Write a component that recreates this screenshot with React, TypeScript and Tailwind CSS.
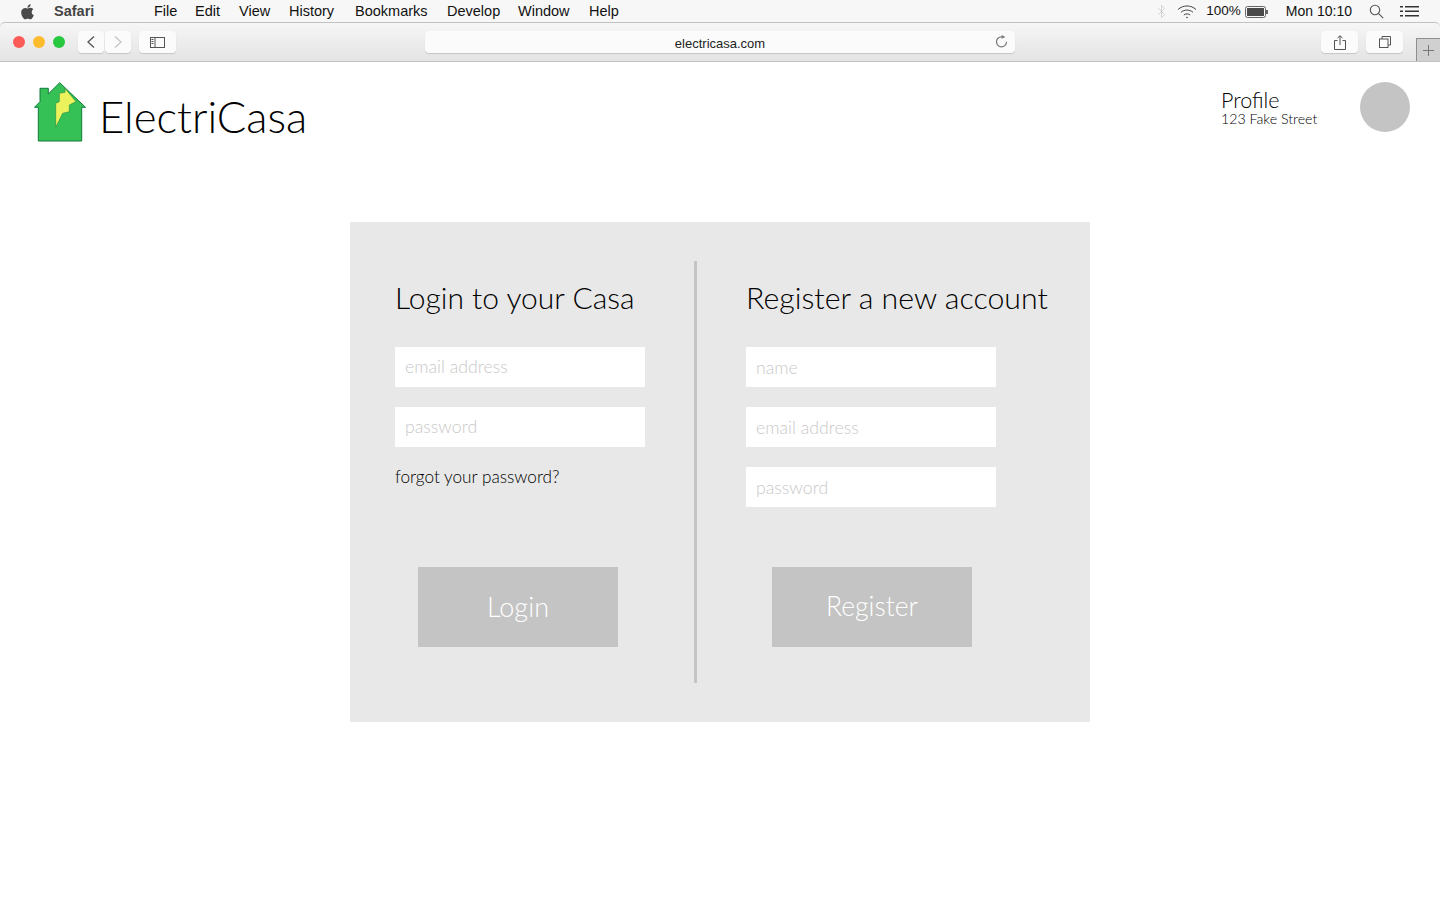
import React from "react";
import { Bluetooth } from "lucide-react";

const menuItems = ["File", "Edit", "View", "History", "Bookmarks", "Develop", "Window", "Help"];

function AppleLogo() {
  return (
    <svg width="15" height="16" viewBox="3 3 18 18.5" fill="#4a4a4a">
      <path d="M17.05 20.28c-.98.95-2.05.8-3.08.35-1.09-.46-2.09-.48-3.24 0-1.44.62-2.2.44-3.06-.35C2.79 15.25 3.51 7.59 9.05 7.31c1.35.07 2.29.74 3.08.8 1.18-.24 2.31-.93 3.57-.84 1.51.12 2.65.72 3.4 1.8-3.12 1.87-2.38 5.98.48 7.13-.57 1.5-1.31 2.99-2.54 4.09zM12.03 7.25c-.15-2.23 1.66-4.07 3.74-4.25.29 2.58-2.34 4.5-3.74 4.25z" />
    </svg>
  );
}

function Wifi() {
  return (
    <svg width="20" height="15" viewBox="0 0 20 15" fill="none" stroke="#444" strokeWidth="1">
      <path d="M1 5.5C6 .8 14 .8 19 5.5" />
      <path d="M4 8.3c3.4-3 8.6-3 12 0" />
      <path d="M6.8 11c1.9-1.5 4.5-1.5 6.4 0" />
      <circle cx="10" cy="13.5" r="0.8" fill="#444" stroke="none" />
    </svg>
  );
}

function Battery() {
  return (
    <svg width="24" height="12" viewBox="0 0 24 12">
      <rect x="0.5" y="0.5" width="20" height="11" rx="2" fill="none" stroke="#666" />
      <rect x="2" y="2" width="17" height="8" fill="#4a4a4a" />
      <rect x="21" y="4" width="2" height="4" fill="#666" />
    </svg>
  );
}

function SearchIcon() {
  return (
    <svg width="15" height="15" viewBox="0 0 15 15" fill="none" stroke="#555" strokeWidth="1.1" className="ml-[17px]">
      <circle cx="6" cy="6" r="4.7" />
      <path d="M9.4 9.4l4.8 4.8" />
    </svg>
  );
}

function ListIcon() {
  return (
    <svg width="19" height="11" viewBox="0 0 19 11" fill="#333">
      <rect x="0" y="0" width="3" height="1.5" />
      <rect x="0" y="4.5" width="3" height="1.5" />
      <rect x="0" y="9" width="3" height="1.5" />
      <rect x="5" y="0" width="14" height="1.5" />
      <rect x="5" y="4.5" width="14" height="1.5" />
      <rect x="5" y="9" width="14" height="1.5" />
    </svg>
  );
}

function Logo() {
  return (
    <svg width="52" height="60" viewBox="0 0 52 60" className="shrink-0">
      <polygon
        points="6,6.3 14.3,6.3 14.3,12 25.7,0.7 51.5,25.3 47.7,25.3 47.7,59 4.3,59 4.3,25.3 0.5,25.3 6,19.7"
        fill="#35c155"
        stroke="#127a3c"
        strokeWidth="1"
      />
      <polygon
        points="31,6.3 42,19.7 35.3,23 35.3,29.7 28.7,31.3 21.7,45.3 21.7,21.3 25.3,19.7 25.3,11.3 31,10.3"
        fill="#ecf25c"
        stroke="#1e8a45"
        strokeWidth="0.6"
      />
    </svg>
  );
}

function ToolButton({ className, children }: { className: string; children: React.ReactNode }) {
  return (
    <div className={`h-[22px] bg-[#fbfbfb] rounded-[4px] shadow-[0_1px_1px_rgba(0,0,0,0.15)] flex items-center justify-center ${className}`}>
      {children}
    </div>
  );
}

function Field({ placeholder, className }: { placeholder: string; className?: string }) {
  return (
    <input
      placeholder={placeholder}
      className={`block w-[250px] h-10 bg-white px-[10px] text-[17.7px] font-light outline-none placeholder:text-[#c9c9c9] ${className || ""}`}
    />
  );
}

export default function App() {
  return (
    <div className="min-h-screen bg-white text-black" style={{ fontFamily: "Lato, sans-serif" }}>
      {/* Menu bar */}
      <div className="bg-[#f7f7f7]">
        <div className="h-[22px] pt-px flex items-center justify-between text-[14.5px] text-[#111]" style={{ fontFamily: "'Liberation Sans', sans-serif" }}>
          <div className="flex items-center">
            <div className="ml-[20px] w-[34px] flex"><AppleLogo /></div>
            <span className="font-bold text-[#444] w-[100px]">Safari</span>
            <div className="grid grid-cols-[41px_44px_50px_66px_92px_71px_71px_auto]">
              {menuItems.map((item) => (
                <span key={item}>{item}</span>
              ))}
            </div>
          </div>
          <div className="flex items-center">
            <Bluetooth size={15} strokeWidth={1.2} className="text-[#c8c8c8] mr-2" />
            <Wifi />
            <span className="ml-[9px] text-[13.5px]">100%</span>
            <div className="ml-[4px] flex"><Battery /></div>
            <span className="ml-[17px] text-[14px]">Mon 10:10</span>
            <SearchIcon />
            <div className="ml-4 mr-[21px] flex"><ListIcon /></div>
          </div>
        </div>

        {/* Browser toolbar */}
        <div className="h-10 rounded-t-[5px] bg-gradient-to-b from-[#f6f6f6] to-[#e4e4e4] border-t border-b border-[#c2c2c2] flex items-start pt-2 relative">
          <div className="flex gap-2 ml-[13px] mt-[5px]">
            <div className="w-3 h-3 rounded-full bg-[#fc5b57]" />
            <div className="w-3 h-3 rounded-full bg-[#fdbc2e]" />
            <div className="w-3 h-3 rounded-full bg-[#27c83f]" />
          </div>
          <ToolButton className="w-[26px] ml-[13px]">
            <svg width="8" height="12" viewBox="0 0 8 12" fill="none" stroke="#555" strokeWidth="1.3"><path d="M7 0.5L1 6l6 5.5" /></svg>
          </ToolButton>
          <ToolButton className="w-[26px] ml-px">
            <svg width="8" height="12" viewBox="0 0 8 12" fill="none" stroke="#c4c4c4" strokeWidth="1.3"><path d="M1 0.5L7 6l-6 5.5" /></svg>
          </ToolButton>
          <ToolButton className="w-[37px] ml-2">
            <svg width="15" height="11" viewBox="0 0 15 11" fill="none" stroke="#555">
              <rect x="0.5" y="0.5" width="14" height="10" />
              <path d="M5 0.5v10M1.5 2.5h2M1.5 4.5h2M1.5 6.5h2" />
            </svg>
          </ToolButton>
          <ToolButton className="w-[590px] ml-[249px] relative text-[13px] text-[#222]">
            <span className="mt-[3px]" style={{ fontFamily: "'Liberation Sans', sans-serif" }}>electricasa.com</span>
            <svg width="13" height="13" viewBox="0 0 13 13" fill="none" stroke="#777" strokeWidth="1.2" className="absolute right-[7px] top-[4px]">
              <path d="M11.5 6.8A5 5 0 1 1 6.5 1.8" />
              <path d="M6.5 0l4 1.9-4 1.9z" fill="#777" stroke="none" />
            </svg>
          </ToolButton>
          <ToolButton className="w-[37px] ml-[306px]">
            <svg width="12" height="15" viewBox="0 0 12 15" fill="none" stroke="#555">
              <path d="M3.5 5.5h-3v9h11v-9h-3M6 10V0.8M3.5 3L6 0.8 8.5 3" />
            </svg>
          </ToolButton>
          <ToolButton className="w-[37px] ml-2">
            <svg width="12" height="12" viewBox="0 0 12 12" fill="none" stroke="#555">
              <rect x="0.5" y="3" width="8.5" height="8.5" />
              <path d="M3 3V0.5h8.5V9H9" />
            </svg>
          </ToolButton>
          <div className="absolute right-0 bottom-0 w-6 h-[23px] bg-[#d0d0d0] border-l border-t border-[#8e8e8e] flex items-center justify-center">
            <svg width="11" height="11" viewBox="0 0 11 11" stroke="#777"><path d="M5.5 0v11M0 5.5h11" /></svg>
          </div>
        </div>
      </div>

      {/* Site header */}
      <header className="flex justify-between pt-5 pl-[34px] pr-[30px]">
        <div className="flex items-start gap-[13px]">
          <Logo />
          <span className="text-[43.7px] font-light leading-none mt-[13px]">ElectriCasa</span>
        </div>
        <div className="flex">
          <div className="w-[139px] pt-[6px]">
            <div className="text-[21.5px] font-light leading-[24px]">Profile</div>
            <div className="text-[14.2px] font-light leading-[14px]">123 Fake Street</div>
          </div>
          <div className="w-[50px] h-[50px] rounded-full bg-[#c4c4c4]" />
        </div>
      </header>

      {/* Card */}
      <main className="w-[740px] h-[500px] mx-auto mt-20 bg-[#e8e8e8] flex py-[39px]">
        <section className="w-[344px] pl-[45px] shrink-0">
          <h2 className="text-[30px] font-light leading-9 mt-[18px] mb-8">Login to your Casa</h2>
          <Field placeholder="email address" className="pb-0.5" />
          <Field placeholder="password" className="mt-5 pb-0.5" />
          <p className="text-[17.2px] font-light leading-5 mt-5">forgot your password?</p>
          <button className="block w-[200px] h-20 mt-20 ml-[23px] bg-[#c4c4c4] text-white text-[27px] font-light">Login</button>
        </section>
        <div className="w-[3px] bg-[#c4c4c4] shrink-0" />
        <section className="pl-[49px]">
          <h2 className="text-[30.3px] font-light leading-9 mt-[18px] mb-8 whitespace-nowrap">Register a new account</h2>
          <Field placeholder="name" />
          <Field placeholder="email address" className="mt-5" />
          <Field placeholder="password" className="mt-5" />
          <button className="block w-[200px] h-20 mt-[60px] ml-[26px] bg-[#c4c4c4] text-white text-[26.5px] font-light">Register</button>
        </section>
      </main>
    </div>
  );
}
